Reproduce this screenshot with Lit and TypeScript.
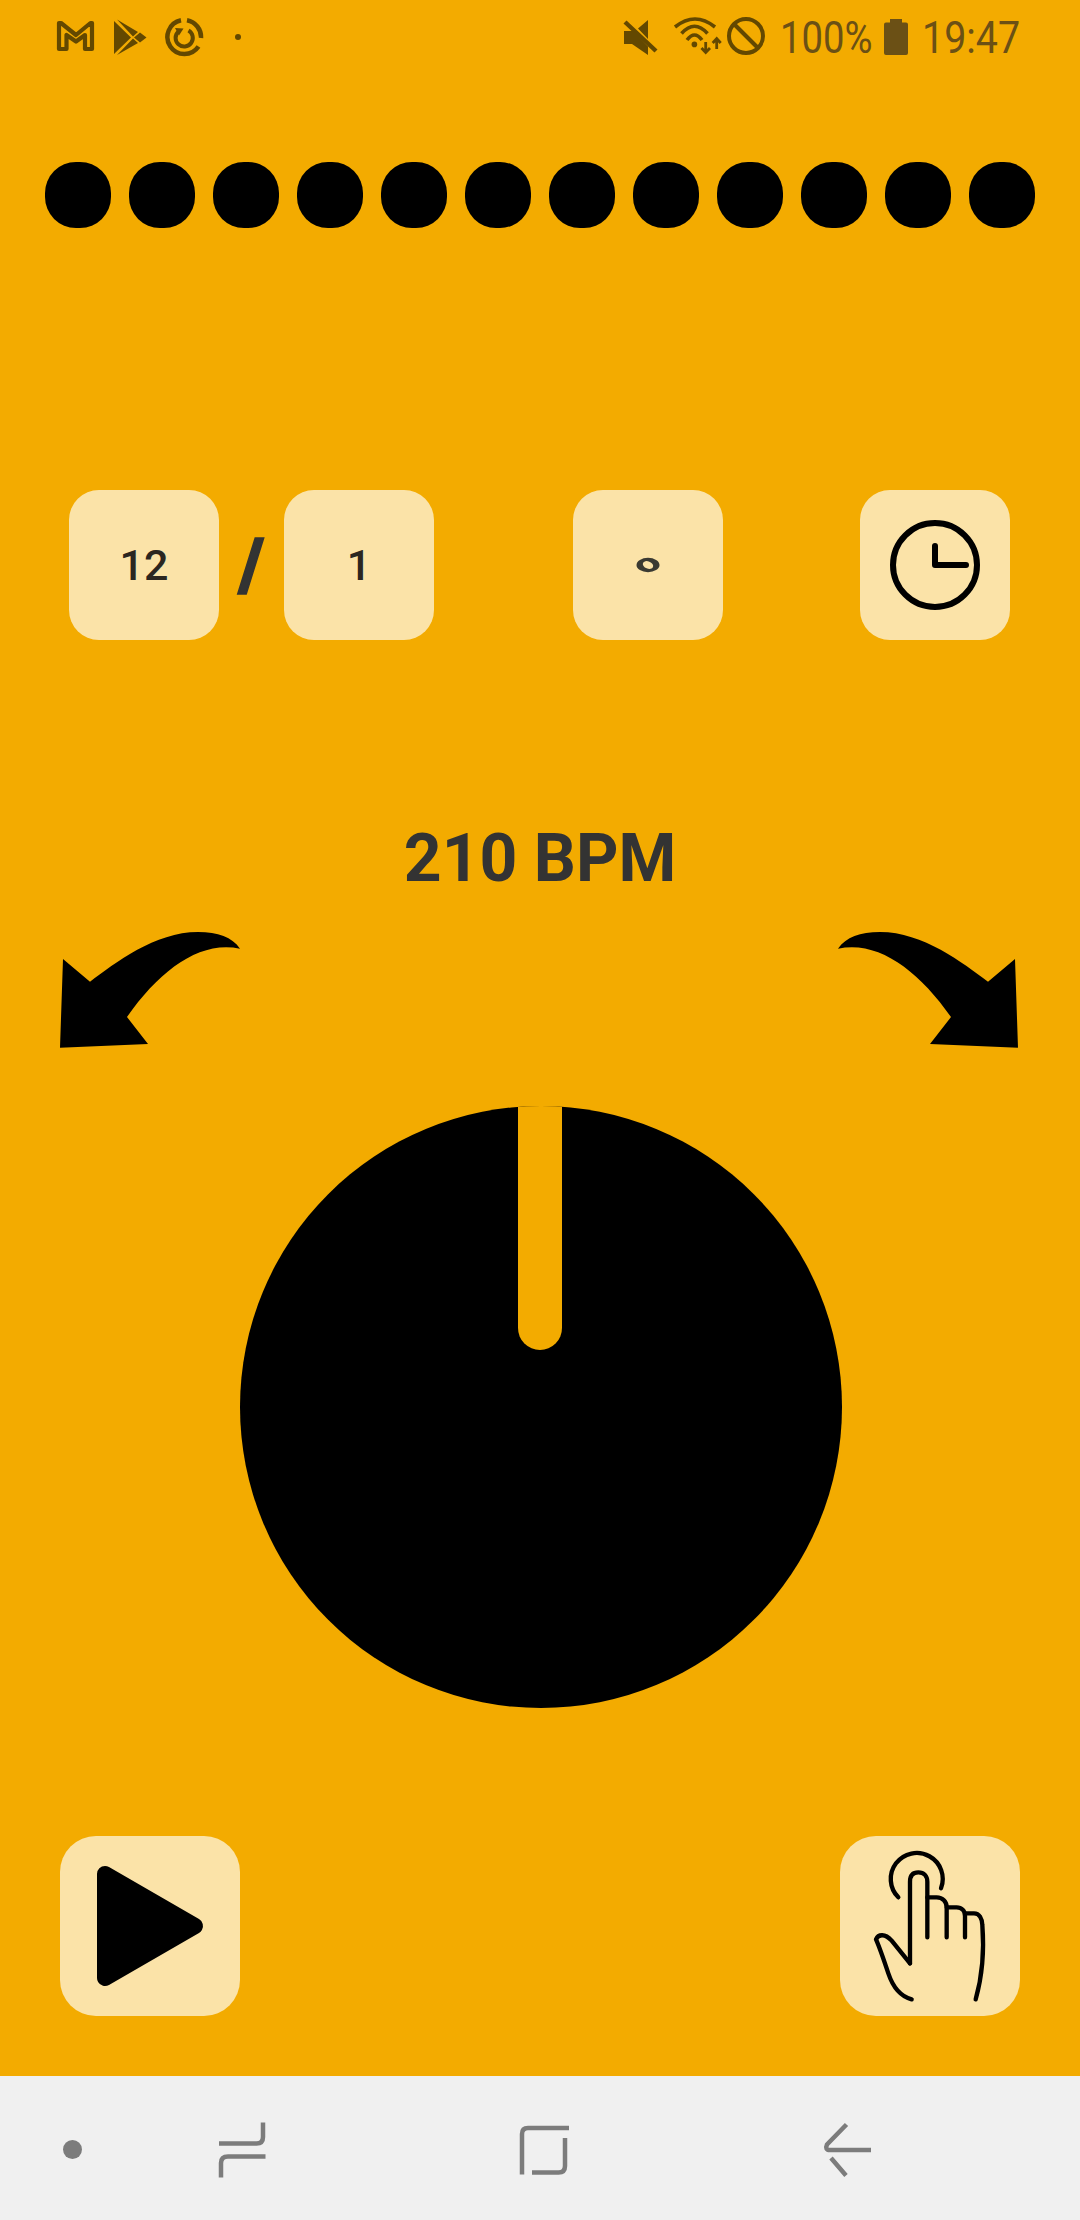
import { LitElement, html, css, svg } from 'lit';
import { customElement, state } from 'lit/decorators.js';

const arrowPath = 'M63 959 L90 981.7 C115 963 155 932 198 932 C218 932 232 937 240 948.7 C200 940 160 970 127 1017 L148 1044 L60 1047.7 Z';

@customElement('app-root')
export class AppRoot extends LitElement {
  static styles = css`
    :host {
      display: block;
      width: 1080px;
      height: 2220px;
      background: #f3ab00;
      font-family: Roboto, sans-serif;
      overflow: hidden;
    }
    svg { display: block; flex: none; }

    /* status bar */
    .status {
      height: 74px;
      display: flex;
      align-items: flex-start;
      justify-content: space-between;
      padding: 0 62px 0 56px;
      color: #6b5015;
    }
    .status-left, .status-right { display: flex; align-items: flex-start; }
    .sicon { fill: #634800; stroke: none; }
    .sline { fill: none; stroke: #634800; stroke-width: 3.6; }
    .stext {
      display: block;
      margin-top: 11px;
      font-size: 45px;
      line-height: 53px;
      font-weight: 400;
      white-space: nowrap;
      transform-origin: left center;
    }
    .pct { width: 91px; margin-left: 13px; transform: scaleX(.85); }
    .batt { margin-left: 13px; margin-right: 14px; }
    .time { width: 96px; transform: scaleX(.875); }

    /* beat dots */
    .beats {
      display: flex;
      gap: 18px;
      margin-top: 88px;
      padding-left: 45px;
    }
    .beat { width: 66px; height: 66px; border-radius: 31px; background: #000; }

    /* meter / note / clock row */
    .config {
      display: flex;
      margin-top: 262px;
      padding-left: 69px;
    }
    .box {
      width: 150px;
      height: 150px;
      border-radius: 30px;
      background: #fbe3a8;
      display: flex;
      align-items: center;
      justify-content: center;
      flex: none;
      font-size: 43px;
      font-weight: 500;
      color: #2b2620;
    }
    .slash {
      width: 65px;
      height: 150px;
      display: flex;
      align-items: center;
      justify-content: center;
      font-size: 72px;
      font-weight: 900;
      color: #333;
      -webkit-text-stroke: 1.5px #333;
    }
    .note { margin-left: 139px; }
    .clock { margin-left: 137px; }

    .bpm {
      margin-top: 179px;
      height: 80px;
      line-height: 80px;
      text-align: center;
      font-size: 66px;
      font-weight: 700;
      color: #333;
    }

    .arrows {
      display: flex;
      justify-content: space-between;
      margin-top: 33px;
      padding: 0 62px 0 60px;
    }
    .flip { transform: scaleX(-1); }

    .knob {
      position: relative;
      width: 602px;
      height: 602px;
      margin: 58px 0 0 240px;
      border-radius: 50%;
      background: #000;
      overflow: hidden;
    }
    .knob-slot {
      position: absolute;
      top: 0;
      left: 278px;
      width: 44px;
      height: 244px;
      border-radius: 0 0 22px 22px;
      background: #f3ab00;
    }

    .actions {
      display: flex;
      justify-content: space-between;
      margin-top: 128px;
      padding: 0 60px;
    }
    .action {
      width: 180px;
      height: 180px;
      border-radius: 36px;
      background: #fbe3a8;
    }

    /* soft keys */
    .nav {
      height: 144px;
      margin-top: 60px;
      background: #f0f0f0;
      display: flex;
      align-items: flex-start;
      padding: 46px 0 0 63px;
      box-sizing: border-box;
    }
    .nav-dot {
      width: 19px;
      height: 19px;
      margin-top: 18px;
      border-radius: 50%;
      background: #7c7c7c;
    }
    .nav-line { fill: none; stroke: #7c7c7c; stroke-width: 4.5; }
    .nav-recent { margin-left: 136px; }
    .nav-home { margin-left: 250px; }
    .nav-back { margin-left: 252px; }
  `;

  @state() beats = 12;
  @state() tempo = 210;

  private leftStatus() {
    return html`
      <svg width="40" height="36" viewBox="56 18 40 36" style="margin-top:18px">
        <path class="sline" style="stroke-width:4.2" stroke-linejoin="round" d="M59 49 L59 23 L61 23 L76 35 L90.5 23 L92 23 L92 49 L85 49 L85 35 L76 41.5 L66.5 35 L66.5 49 Z" />
      </svg>
      <svg width="36" height="38" viewBox="112 18 36 38" style="margin:18px 0 0 16px">
        <path class="sicon" d="M114 21 L131 37.5 L114 54 Z M117 19.5 L138 32 L133 36.5 Z M117 55 L138 43 L133 38.5 Z M134 37.5 L140 32.5 L146.5 37.5 L140 42.5 Z" />
      </svg>
      <svg width="42" height="42" viewBox="163 16 42 42" style="margin:16px 0 0 15px">
        <path class="sline" style="stroke-width:4.5" d="M187 20.3 A17 17 0 0 1 201 38 M198.5 46.5 A17 17 0 1 1 181 20.3" />
        <path class="sline" style="stroke-width:4" d="M188.5 30.5 A8.6 8.6 0 1 1 178.5 31.5" />
        <path class="sicon" d="M175 28 L183.5 28.5 L179 35.5 Z" />
      </svg>
      <svg width="8" height="8" viewBox="234 33 8 8" style="margin:33px 0 0 29px">
        <circle class="sicon" cx="238" cy="37" r="3" />
      </svg>
    `;
  }

  private rightStatus() {
    return html`
      <svg width="37" height="38" viewBox="622 18 37 38" style="margin-top:18px">
        <path class="sicon" d="M624 31 L633 31 L648 46.5 L648 55 L632 44 L624 44 Z M638 28.5 L648 20 L648 39 Z" />
        <path fill="none" stroke="#634800" stroke-width="4.4" d="M625 22 L656 51" />
      </svg>
      <svg width="53" height="40" viewBox="672 16 53 40" style="margin:16px 0 0 13px">
        <path class="sline" d="M675 27 Q695 11 715 27 M681.5 33.5 Q694.5 19 707.5 33.5 M687 40 Q694.5 30 702 40" />
        <circle class="sicon" cx="694.4" cy="44.4" r="2.8" />
        <path class="sline" style="stroke-width:2.8" d="M705.7 42 L705.7 52 M701.5 48 L705.7 52.5 L710 48 M716.7 49 L716.7 39 M712.7 43 L716.7 38.5 L720.7 43" />
      </svg>
      <svg width="42" height="42" viewBox="725 15 42 42" style="margin-top:15px">
        <circle class="sline" style="stroke-width:4" cx="746" cy="36" r="17" />
        <path class="sline" style="stroke-width:4" d="M734 24 L758 48" />
      </svg>
      <span class="stext pct">100%</span>
      <svg class="batt" width="24" height="37" viewBox="884 19 24 37" style="margin-top:19px">
        <path fill="#6b5015" d="M890 19 L902 19 L902 22.5 L906 22.5 Q908 22.5 908 24.5 L908 53 Q908 55 906 55 L886 55 Q884 55 884 53 L884 24.5 Q884 22.5 886 22.5 L890 22.5 Z" />
      </svg>
      <span class="stext time">19:47</span>
    `;
  }

  render() {
    return html`
      <div class="status">
        <div class="status-left">${this.leftStatus()}</div>
        <div class="status-right">${this.rightStatus()}</div>
      </div>

      <div class="beats">
        ${Array.from({ length: this.beats }, () => html`<div class="beat"></div>`)}
      </div>

      <div class="config">
        <div class="box">12</div>
        <div class="slash">/</div>
        <div class="box">1</div>
        <div class="box note">
          <svg width="24" height="16" viewBox="0 0 24 16">
            <ellipse cx="12" cy="8" rx="11.5" ry="7.2" fill="#3a3a32" />
            <ellipse cx="12" cy="8" rx="5.4" ry="3.6" transform="rotate(22 12 8)" fill="#fbe3a8" />
          </svg>
        </div>
        <div class="box clock">
          <svg width="96" height="96" viewBox="0 0 96 96">
            <circle cx="48" cy="48" r="42" fill="none" stroke="#000" stroke-width="6" />
            <path d="M48 29 L48 48 L79 48" fill="none" stroke="#000" stroke-width="6" stroke-linecap="round" stroke-linejoin="round" />
          </svg>
        </div>
      </div>

      <div class="bpm">${this.tempo} BPM</div>

      <div class="arrows">
        <svg width="180" height="116" viewBox="60 932 180 116"><path d=${arrowPath} /></svg>
        <svg class="flip" width="180" height="116" viewBox="60 932 180 116"><path d=${arrowPath} /></svg>
      </div>

      <div class="knob"><div class="knob-slot"></div></div>

      <div class="actions">
        <div class="action">
          <svg width="180" height="180" viewBox="0 0 180 180">
            <polygon points="45,38 135,90 45,142" fill="#000" stroke="#000" stroke-width="16" stroke-linejoin="round" />
          </svg>
        </div>
        <div class="action">
          <svg width="180" height="180" viewBox="60 48 540 540" fill="none" stroke="#000" stroke-width="13" stroke-linecap="round" stroke-linejoin="round">
            ${svg`
              <path d="M235 232 A78 78 0 1 1 363 205" />
              <path d="M270 430 L270 185 C270 165 280 157 295 157 C312 157 322 168 322 185 L322 352" />
              <path d="M322 232 L350 232 C368 232 380 245 380 262 L380 352" />
              <path d="M380 262 L410 262 C425 262 435 272 435 288 L435 352" />
              <path d="M435 280 L462 280 C478 280 486 295 487 315 C492 380 492 450 467 538" />
              <path d="M270 430 L215 362 C195 340 175 342 168 358 C180 385 195 430 205 460 C220 505 245 530 275 538" />
            `}
          </svg>
        </div>
      </div>

      <div class="nav">
        <div class="nav-dot"></div>
        <svg class="nav-recent" width="50" height="56" viewBox="218 2122 50 56">
          <path class="nav-line" d="M263 2122.5 L263 2137 Q263 2143.5 256.5 2143.5 L219 2143.5 M265.5 2156.5 L228 2156.5 Q221 2156.5 221 2163 L221 2177.5" />
        </svg>
        <svg class="nav-home" width="52" height="56" viewBox="518 2122 52 56">
          <path class="nav-line" d="M569 2128 L528 2128 Q522 2128 522 2134 L522 2174.5 M565 2138 L565 2166 Q565 2172.5 558.5 2172.5 L532 2172.5" />
        </svg>
        <svg class="nav-back" width="50" height="56" viewBox="822 2122 50 56">
          <path class="nav-line" d="M846.5 2124.5 L827 2144.5 Q824.5 2150 830 2150 L871 2150 M831 2158 L846 2175.5" />
        </svg>
      </div>
    `;
  }
}
